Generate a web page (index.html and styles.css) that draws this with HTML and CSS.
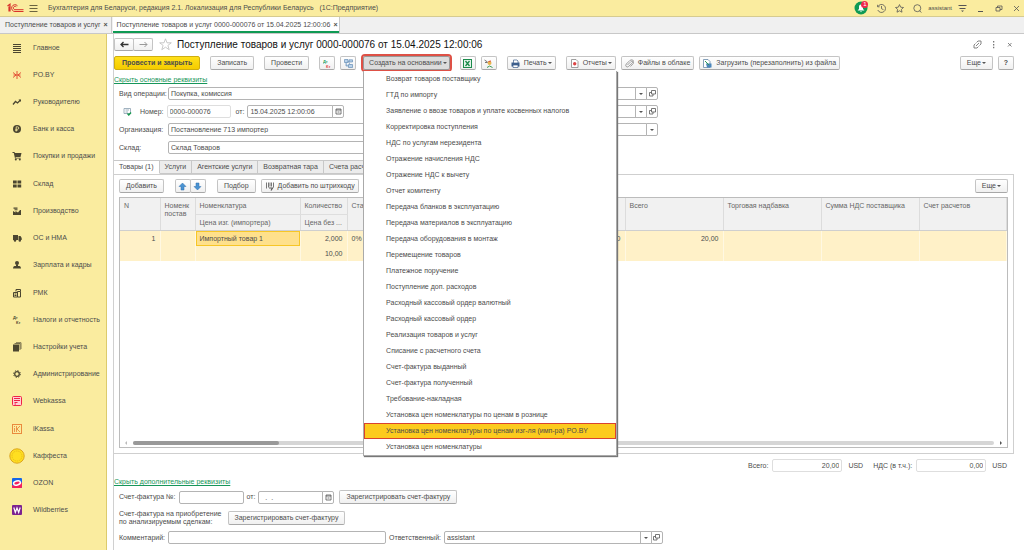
FILE: index.html
```html
<!DOCTYPE html>
<html lang="ru">
<head>
    <meta charset="UTF-8">
    <meta name="viewport" content="width=device-width, initial-scale=1.0">
    <title>Поступление товаров и услуг</title>
    <link rel="stylesheet" href="styles.css">
</head>
<body>
    <header class="topbar">
        <svg class="logo" viewBox="0 0 17 10" fill="none" stroke="#d9322b"><path d="M.5 3 3 1.2V8.500M2 3.500v5" stroke-width="1.200"/><path d="M10.500 2.800A3.400 3.400 0 1 0 8 8.500h8.500M9.300 3.800A1.700 1.700 0 1 0 8 6.700h8.500"/></svg>
        <svg class="icon" viewBox="0 0 9 9" stroke="#6b6440"><path d="M.5 1.500h8M.5 4.500h8M.5 7.500h8"/></svg>
        <span class="app-title">Бухгалтерия для Беларуси, редакция 2.1. Локализация для Республики Беларусь &nbsp; (1С:Предприятие)</span>
        <div class="top-tools">
            <span class="bell">
                <svg viewBox="0 0 14 14"><circle cx="7" cy="7" r="6.500" fill="#0f9a54"/><path d="M3.500 9.500 5 8V5.500a2 2 0 0 1 4 0V8l1.500 1.500zM6 10.200h2l-1 1z" fill="#fff"/></svg>
                <span class="badge">1</span>
            </span>
            <svg class="icon" viewBox="0 0 9 9" fill="none" stroke="#555" stroke-width=".8"><path d="M1 2.500A4 4 0 1 1 .8 6M.6.800v2h2M4.500 2v2.700l2 1"/></svg>
            <svg class="icon" viewBox="0 0 9 9" fill="none" stroke="#555" stroke-width=".8"><path d="m4.500.6 1.200 2.600 2.800.3-2.100 1.900.6 2.800-2.500-1.400L2 8.200l.6-2.800L.5 3.500l2.800-.3z"/></svg>
            <svg class="icon" viewBox="0 0 9 9" fill="none" stroke="#555" stroke-width=".8"><circle cx="4.300" cy="4.200" r="3.500"/><path d="m6.500 6.700 2 1.900"/></svg>
            <span class="user">assistant</span>
            <svg class="icon" viewBox="0 0 9 9" fill="none" stroke="#555"><path d="M.5 1.500h8M1.500 4.500h6"/><path d="M3 6.500h3L4.500 8z" fill="#555" stroke="none"/></svg>
            <svg class="icon" viewBox="0 0 9 9" stroke="#555"><path d="M2 7.500h5"/></svg>
            <svg class="icon" viewBox="0 0 9 9" fill="none" stroke="#555" stroke-width=".8"><path d="M2 3.500h4v3.500H2zM3.500 3.500V2H8v3.500H6"/></svg>
            <svg class="icon" viewBox="0 0 9 9" stroke="#555" stroke-width=".8"><path d="m2 2 5 5M7 2 2 7"/></svg>
        </div>
    </header>

    <nav class="window-tabs">
        <a class="window-tab" href="#">Поступление товаров и услуг <b>×</b></a>
        <a class="window-tab active" href="#">Поступление товаров и услуг 0000-000076 от 15.04.2025 12:00:06 <b>×</b></a>
    </nav>

    <div class="workspace">
        <nav class="sidebar">
            <a href="#"><svg viewBox="0 0 16 16" stroke="#4b4630"><path d="M4 4.500h8M4 6.500h8M4 8.500h8M4 10.500h8M4 12.500h8"/></svg>Главное</a>
            <a href="#"><svg viewBox="0 0 16 16" stroke="#e0452c"><path d="M8 4v8M4 5.500 7 8l-3 2.500M12 5.500 9 8l3 2.500M4.500 8h7" fill="none" stroke-width=".9"/></svg>PO.BY</a>
            <a href="#"><svg viewBox="0 0 16 16" fill="none" stroke="#4b4630" stroke-width="1.300"><path d="m4 10.500 2.500-3 2 1.500L11.500 6"/><path d="M9.500 5.500h2.500V8z" fill="#4b4630" stroke="none"/></svg>Руководителю</a>
            <a href="#"><svg viewBox="0 0 16 16"><circle cx="8" cy="8" r="4" fill="#4b4630"/><path d="M7.200 10.500V5.800h1.300a1.200 1.200 0 0 1 0 2.500H6.300M6.300 9.400h2.200" fill="none" stroke="#faec9f" stroke-width=".8"/></svg>Банк и касса</a>
            <a href="#"><svg viewBox="0 0 16 16" fill="#4b4630"><path d="M3.500 4h2l.4 1H12.500l-1 4H6.500l.2.800h5v.8H6L4.800 4.900H3.500z"/><circle cx="6.800" cy="11.500" r="1"/><circle cx="10.800" cy="11.500" r="1"/></svg>Покупки и продажи</a>
            <a href="#"><svg viewBox="0 0 16 16" fill="#4b4630"><path d="M4 4.500h3.700v3H4zM8.500 4.500h3.700v3H8.500zM4 8.500h3.700v3H4zM8.500 8.500h3.700v3H8.500z"/></svg>Склад</a>
            <a href="#"><svg viewBox="0 0 16 16" fill="#4b4630"><path d="M4 12V8l2.500 1.500V8L9 9.500 11 7h1v5z"/><path d="M4.500 4.500h4v1.200h-4zM5.500 6.200h3v1h-3z"/></svg>Производство</a>
            <a href="#"><svg viewBox="0 0 16 16" fill="#4b4630"><path d="M4 5h5v5H4zM9.500 6H11.500l1.200 2v2H9.500z"/><circle cx="6" cy="10.500" r="1.200"/><circle cx="10.800" cy="10.500" r="1.200"/></svg>ОС и НМА</a>
            <a href="#"><svg viewBox="0 0 16 16" fill="#4b4630"><circle cx="8" cy="6" r="2"/><path d="M7 7.500h2v1.500h1.500q1.500 0 1.500 2.500H4q0-2.500 1.500-2.500H7z"/></svg>Зарплата и кадры</a>
            <a href="#"><svg viewBox="0 0 16 16" fill="none" stroke="#4b4630"><path d="M4.500 7.500h4v4.500h-4zM8.500 6.500h3v5.500h-3zM7 6.500v-2h4.500v2M5.500 9h2M5.500 10.500h2"/></svg>РМК</a>
            <a href="#"><svg viewBox="0 0 16 16" class="dtkt" fill="#4b4630"><text x="4" y="7">Дт</text><text x="7" y="12">Кт</text></svg>Налоги и отчетность</a>
            <a href="#"><svg viewBox="0 0 16 16" fill="#4b4630"><path d="M4 5.500h6V12.500H4z"/><path d="M5.500 4.500H11V11M7 3.700h5V10" fill="none" stroke="#4b4630" stroke-width=".7"/></svg>Настройки учета</a>
            <a href="#"><svg viewBox="0 0 16 16" fill="none" stroke="#4b4630"><circle cx="8" cy="8" r="2.300" stroke-width="1.300"/><circle cx="8" cy="8" r="3.400" stroke-dasharray="1.300 1.370"/></svg>Администрирование</a>
            <a href="#"><svg viewBox="0 0 16 16"><rect x="3.500" y="3.500" width="9" height="9" rx="1" fill="#ffd0d4" stroke="#ef2347"/><path d="M5 5.500h6M5 7.500h6M5.500 9.500h3M5.500 11h1.500" stroke="#ef2347" fill="none"/></svg>Webkassa</a>
            <a href="#"><svg viewBox="0 0 16 16"><rect x="3.500" y="3.500" width="9" height="9" fill="none" stroke="#ea8a3e"/><path d="M5.500 7v4M5.500 5v1M7.500 5v6M11 5 8 8l3 3" stroke="#ea8a3e" stroke-width=".9" fill="none"/></svg>iKassa</a>
            <a href="#"><svg viewBox="0 0 16 16"><circle cx="8" cy="8" r="7.200" fill="#ffdf20" stroke="#dba51f"/><circle cx="8" cy="8" r="5" fill="none" stroke="#e3b21b" stroke-width=".7" stroke-dasharray="1.500 .7"/></svg>Каффеста</a>
            <a href="#"><svg viewBox="0 0 16 16"><rect x="3" y="3" width="10" height="10" rx="1" fill="#1466e8"/><path d="M3 10q5 2.500 10-3v5q0 1-1 1H4q-1 0-1-1z" fill="#f4215c"/><ellipse cx="8" cy="8" rx="3.500" ry="2" fill="#f4215c" stroke="#fff" stroke-width="1.500" transform="rotate(-15 8 8)"/></svg>OZON</a>
            <a href="#"><svg viewBox="0 0 16 16"><rect x="3" y="3" width="10" height="10" rx="1" fill="#7c2390"/><path d="m4.800 5.500 1.500 5L8 6l1.700 4.500 1.500-5" fill="none" stroke="#fff" stroke-width="1.200"/></svg>Wildberries</a>
        </nav>

        <main class="document">
            <div class="doc-head">
                <div class="btn-group">
                    <button class="btn" aria-label="Назад"><svg class="icon" viewBox="0 0 9 9" fill="none" stroke="#333" stroke-width="1.300"><path d="M8.500 4.500H1M3.500 2 1 4.500 3.500 7"/></svg></button>
                    <button class="btn" aria-label="Вперед"><svg class="icon" viewBox="0 0 9 9" fill="none" stroke="#999"><path d="M.5 4.500H8M5.500 2 8 4.500 5.500 7"/></svg></button>
                </div>
                <svg class="star" viewBox="0 0 13 13" fill="none" stroke="#bbb" stroke-width=".8"><path d="m6.500.8 1.500 4h4.300L8.900 7.400l1.300 4.300-3.700-2.500-3.700 2.500 1.300-4.300L.7 4.800H5z"/></svg>
                <h1>Поступление товаров и услуг 0000-000076 от 15.04.2025 12:00:06</h1>
                <div class="doc-tools">
                    <svg class="icon" viewBox="0 0 9 9" fill="none" stroke="#777" stroke-width=".9"><path d="M3.500 2.500 5 1h3v3L6.500 5.500M5.500 6.500 4 8H1V5l1.500-1.500M3 6l3-3"/></svg>
                    <svg class="icon" viewBox="0 0 9 9" fill="#777"><path d="M4 1h1.300v1.500H4zM4 4h1.300v1.500H4zM4 6.800h1.300v1.500H4z"/></svg>
                    <svg class="icon" viewBox="0 0 9 9" stroke="#777" stroke-width=".9"><path d="m3 3 3.500 3.500M6.500 3 3 6.500"/></svg>
                </div>
            </div>

            <div class="commands">
                <button class="btn primary">Провести и закрыть</button>
                <button class="btn">Записать</button>
                <button class="btn">Провести</button>
                <div class="pair">
                    <button class="btn square" aria-label="Проводки"><svg class="icon" viewBox="0 0 9 9"><g class="dtkt"><text x="0" y="4" fill="#1d9c5a">Дт</text><text x="3" y="9" fill="#e2433a">Кт</text></g></svg></button>
                    <button class="btn square" aria-label="Структура"><svg class="icon" viewBox="0 0 9 9" fill="#b9d2ea" stroke="#5582ad" stroke-width=".6"><path d="M.5.500h3.500v3H.5zM5 .8h3.500v2.200H5zM4.500 5.500h4v3h-4zM2 3.500V7h2.500M4 2l2 3.500"/></svg></button>
                </div>
                <div class="dropdown">
                    <button class="btn pressed">Создать на основании <i class="caret"></i></button>
                    <ul class="menu">
                        <li><button>Возврат товаров поставщику</button></li>
                        <li><button>ГТД по импорту</button></li>
                        <li><button>Заявление о ввозе товаров и уплате косвенных налогов</button></li>
                        <li><button>Корректировка поступления</button></li>
                        <li><button>НДС по услугам нерезидента</button></li>
                        <li><button>Отражение начисления НДС</button></li>
                        <li><button>Отражение НДС к вычету</button></li>
                        <li><button>Отчет комитенту</button></li>
                        <li><button>Передача бланков в эксплуатацию</button></li>
                        <li><button>Передача материалов в эксплуатацию</button></li>
                        <li><button>Передача оборудования в монтаж</button></li>
                        <li><button>Перемещение товаров</button></li>
                        <li><button>Платежное поручение</button></li>
                        <li><button>Поступление доп. расходов</button></li>
                        <li><button>Расходный кассовый ордер валютный</button></li>
                        <li><button>Расходный кассовый ордер</button></li>
                        <li><button>Реализация товаров и услуг</button></li>
                        <li><button>Списание с расчетного счета</button></li>
                        <li><button>Счет-фактура выданный</button></li>
                        <li><button>Счет-фактура полученный</button></li>
                        <li><button>Требование-накладная</button></li>
                        <li><button>Установка цен номенклатуры по ценам в рознице</button></li>
                        <li><button class="selected">Установка цен номенклатуры по ценам изг-ля (имп-ра) PO.BY</button></li>
                        <li><button>Установка цен номенклатуры</button></li>
                    </ul>
                </div>
                <div class="pair">
                    <button class="btn square" aria-label="Excel"><svg class="icon" viewBox="0 0 9 9"><rect x=".5" y=".5" width="8" height="8" fill="#e4f3e9" stroke="#1b8a4b"/><path d="m2.500 2 4 5M6.500 2l-4 5" stroke="#1b8a4b" stroke-width="1.300"/></svg></button>
                    <button class="btn square" aria-label="Заполнить"><svg class="icon" viewBox="0 0 9 9" fill="none"><circle cx="5.500" cy="4" r="2" fill="#e9b44b"/><path d="M.5 1 3.500 3M1 3.500h2.500" stroke="#555" stroke-width=".8"/><path d="M3 8.500q2.500-3 5.500 0" stroke="#3d9a55"/><path d="M4.500 2.500 7 2" stroke="#d64b3a"/></svg></button>
                </div>
                <button class="btn with-icon"><svg class="icon" viewBox="0 0 9 9"><path d="M.5 3.500h8v4h-8z" fill="#3d5f8c"/><path d="M2.500 1H6l1 1v2H2.500zM2 6h5v2.500H2z" fill="#fff" stroke="#3d5f8c" stroke-width=".7"/></svg>Печать <i class="caret"></i></button>
                <div class="pair">
                    <button class="btn with-icon"><svg class="icon" viewBox="0 0 9 9"><path d="M1.500.500H6L8 2.500v6H1.500z" fill="#fff" stroke="#888" stroke-width=".8"/><circle cx="4.700" cy="4.800" r="1.700" fill="#dc4444"/></svg>Отчеты <i class="caret"></i></button>
                    <button class="btn with-icon"><svg class="icon" viewBox="0 0 9 9" fill="none" stroke="#888" stroke-width=".8"><path d="M2.500 6 6 2.500q1-.8 1.500 0t-.3 1.500L3.500 7.500q-1.300 1-2.300 0T1.300 5L5 1.300Q7 .2 8.300 1.500t0 3L5.500 7.500"/></svg>Файлы в облаке</button>
                    <button class="btn with-icon"><svg class="icon" viewBox="0 0 9 9"><path d="M.5.500H5L7 2.500v6H.5z" fill="#fff" stroke="#6789a8" stroke-width=".8"/><path d="M3 4.500h5.500v4H4z" fill="#4b86bb"/><path d="m2 2 4 4" stroke="#2c9d5a"/></svg>Загрузить (перезаполнить) из файла</button>
                </div>
                <div class="pair right">
                    <button class="btn">Еще <i class="caret"></i></button>
                    <button class="btn square"><b>?</b></button>
                </div>
            </div>

            <a class="toggle-link" href="#">Скрыть основные реквизиты</a>

            <div class="fields">
                <div class="field">
                    <label for="operation">Вид операции:</label>
                    <input id="operation" type="text" value="Покупка, комиссия">
                </div>
                <div class="field combo">
                    <input type="text" aria-label="Контрагент">
                    <button aria-label="Выбрать контрагента"><i class="caret"></i></button>
                    <button aria-label="Открыть контрагента"><svg class="open" viewBox="0 0 7 7"><path d="M2.500.500h4v3.500h-4zM2.500 2.500h-2v3.500h3.500V4"/></svg></button>
                </div>
                <div class="field">
                    <svg class="posted" viewBox="0 0 9 9" fill="none"><path d="M1 1.500h6.500v5H1zM2.500 3h3.500M2.500 5h2.500" stroke="#8aa0b0" stroke-width=".8"/><path d="m4.500 6.500 1.300 1.500 2.200-2.500" stroke="#17994f" stroke-width="1.400"/></svg>
                    <label class="auto" for="number">Номер:</label>
                    <input class="readonly number" id="number" type="text" value="0000-000076">
                    <label class="auto from" for="date">от:</label>
                    <div class="combo date">
                        <input id="date" type="text" value="15.04.2025 12:00:06">
                        <button aria-label="Календарь"><svg class="open" viewBox="0 0 7 7"><path d="M1 1h5v5H1zM1 2h5M2.500 4h2"/></svg></button>
                    </div>
                </div>
                <div class="field combo">
                    <input type="text" aria-label="Договор">
                    <button aria-label="Выбрать договор"><i class="caret"></i></button>
                    <button aria-label="Открыть договор"><svg class="open" viewBox="0 0 7 7"><path d="M2.500.500h4v3.500h-4zM2.500 2.500h-2v3.500h3.500V4"/></svg></button>
                </div>
                <div class="field">
                    <label for="org">Организация:</label>
                    <input id="org" type="text" value="Постановление 713 импортер">
                </div>
                <div class="field combo">
                    <input type="text" aria-label="Зачет аванса">
                    <button aria-label="Выбрать зачет аванса"><i class="caret"></i></button>
                </div>
                <div class="field">
                    <label for="store">Склад:</label>
                    <input id="store" type="text" value="Склад Товаров">
                </div>
            </div>

            <div class="tabs">
                <button class="tab active">Товары (1)</button>
                <button class="tab">Услуги</button>
                <button class="tab">Агентские услуги</button>
                <button class="tab">Возвратная тара</button>
                <button class="tab">Счета расчетов</button>
            </div>

            <section class="panel">
                <div class="panel-tools">
                    <button class="btn">Добавить</button>
                    <div class="btn-group arrows">
                        <button class="btn" aria-label="Вверх"><svg class="icon" viewBox="0 0 9 9" fill="#4a93d2" stroke="#2f6fae" stroke-width=".5"><path d="m4.500 1 3.500 3.500H6V8H3V4.500H1z"/></svg></button>
                        <button class="btn" aria-label="Вниз"><svg class="icon" viewBox="0 0 9 9" fill="#4a93d2" stroke="#2f6fae" stroke-width=".5"><path d="M4.500 8 8 4.500H6V1H3v3.500H1z"/></svg></button>
                    </div>
                    <button class="btn">Подбор</button>
                    <button class="btn barcode"><svg class="icon" viewBox="0 0 9 9" stroke="#555" fill="none"><path d="M1.500.500v6M3.500.500v5M5 .500v4M6.500.500v4M8.500.500v5" stroke-width=".8"/><path d="M4 6h3.500L6 8.500" stroke-width="1.200"/></svg>Добавить по штрихкоду</button>
                    <button class="btn right">Еще <i class="caret"></i></button>
                </div>

                <div class="grid-box">
                    <table class="grid">
                        <colgroup>
                            <col class="c-n"><col class="c-sup"><col class="c-item"><col class="c-qty"><col class="c-rate"><col class="c-sum"><col class="c-total"><col class="c-total"><col class="c-total"><col>
                        </colgroup>
                        <thead>
                            <tr>
                                <th rowspan="2">N</th>
                                <th rowspan="2">Номенк постав</th>
                                <th class="split">Номенклатура</th>
                                <th class="split">Количество</th>
                                <th rowspan="2">Ставка</th>
                                <th rowspan="2"></th>
                                <th rowspan="2">Всего</th>
                                <th rowspan="2">Торговая надбавка</th>
                                <th rowspan="2">Сумма НДС поставщика</th>
                                <th rowspan="2">Счет расчетов</th>
                            </tr>
                            <tr>
                                <th>Цена изг. (импортера)</th>
                                <th>Цена без ...</th>
                            </tr>
                        </thead>
                        <tbody>
                            <tr>
                                <td class="num" rowspan="2">1</td>
                                <td rowspan="2"></td>
                                <td class="current">Импортный товар 1</td>
                                <td class="num">2,000</td>
                                <td rowspan="2">0%</td>
                                <td class="num" rowspan="2">20,00</td>
                                <td class="num" rowspan="2">20,00</td>
                                <td rowspan="2"></td>
                                <td rowspan="2"></td>
                                <td rowspan="2"></td>
                            </tr>
                            <tr>
                                <td></td>
                                <td class="num">10,00</td>
                            </tr>
                        </tbody>
                    </table>
                    <div class="scroll">
                        <i class="scroll-arrow"></i>
                        <div class="track"><div class="thumb"></div></div>
                        <i class="scroll-arrow next"></i>
                    </div>
                </div>
            </section>

            <div class="totals">
                <label for="total">Всего:</label>
                <input class="readonly" id="total" type="text" value="20,00">
                <span>USD</span>
                <label class="vat" for="vat">НДС (в т.ч.):</label>
                <input class="readonly" id="vat" type="text" value="0,00">
                <span>USD</span>
            </div>

            <a class="toggle-link" href="#">Скрыть дополнительные реквизиты</a>

            <div class="extra">
                <div class="line">
                    <label for="invoice">Счет-фактура №:</label>
                    <input class="invoice" id="invoice" type="text">
                    <label class="from" for="invoice-date">от:</label>
                    <div class="combo invoice-date">
                        <input id="invoice-date" type="text" value="  .  .">
                        <button aria-label="Календарь"><svg class="open" viewBox="0 0 7 7"><path d="M1 1h5v5H1zM1 2h5M2.500 4h2"/></svg></button>
                    </div>
                    <button class="btn register">Зарегистрировать счет-фактуру</button>
                </div>
                <div class="line tall">
                    <span>Счет-фактура на приобретение<br>по анализируемым сделкам:</span>
                    <button class="btn">Зарегистрировать счет-фактуру</button>
                </div>
                <div class="line">
                    <label for="comment">Комментарий:</label>
                    <input class="comment" id="comment" type="text">
                    <label for="owner">Ответственный:</label>
                    <div class="combo owner">
                        <input id="owner" type="text" value="assistant">
                        <button aria-label="Выбрать ответственного"><i class="caret"></i></button>
                        <button aria-label="Открыть ответственного"><svg class="open" viewBox="0 0 7 7"><path d="M2.500.500h4v3.500h-4zM2.500 2.500h-2v3.500h3.500V4"/></svg></button>
                    </div>
                </div>
            </div>
        </main>
    </div>
</body>
</html>
```
FILE: styles.css
```css
* {
    box-sizing: border-box;
}
body {
    margin: 0;
    min-height: 100vh;
    display: flex;
    flex-direction: column;
    background-color: #fff;
    color: #4c4c4c;
    font-family: "Liberation Sans", Arial, sans-serif;
    font-size: 7px;
    line-height: 8px;
}
a {
    color: inherit;
    text-decoration: none;
}
button, input {
    font: inherit;
    color: inherit;
    margin: 0;
}
svg {
    display: block;
    flex: none;
}
.icon {
    width: 9px;
    height: 9px;
}

/* top bar */
.topbar {
    display: flex;
    align-items: center;
    height: 17px;
    padding: 0 3px 0 7px;
    background-color: #faec9f;
    border-bottom: 1px solid #d6cb90;
}
.logo {
    width: 17px;
    height: 10px;
    margin-right: 5px;
}
.app-title {
    margin-left: 10px;
    white-space: nowrap;
}
.top-tools {
    display: flex;
    align-items: center;
    gap: 9px;
    margin-left: auto;
}
.bell {
    position: relative;
}
.bell svg {
    width: 14px;
    height: 14px;
}
.badge {
    position: absolute;
    top: 0;
    right: 0;
    width: 7px;
    height: 7px;
    border-radius: 50%;
    background-color: #f0284a;
    color: #fff;
    font-size: 6px;
    line-height: 7px;
    text-align: center;
}
.user {
    margin: 0 -3px;
    font-size: 6px;
}

/* open windows */
.window-tabs {
    display: flex;
    height: 17px;
    background-color: #f0f0f0;
    border-bottom: 1px solid #c8c8c8;
}
.window-tab {
    display: flex;
    align-items: center;
    gap: 3px;
    padding: 0 3px 0 5px;
    border-right: 1px solid #c8c8c8;
}
.window-tab.active {
    margin-left: 1px;
    padding: 0 2px 0 4px;
    background-color: #fff;
    box-shadow: inset 0 -2px #0f9a54;
}

.workspace {
    flex: 1;
    display: flex;
}

/* sections */
.sidebar {
    display: flex;
    flex-direction: column;
    width: 107px;
    flex: none;
    padding-bottom: 26px;
    background-color: #faec9f;
    border-right: 1px solid #dccb6c;
}
.sidebar a {
    flex: 1;
    display: flex;
    align-items: center;
    gap: 8px;
    padding-left: 9px;
    white-space: nowrap;
}
.sidebar svg {
    width: 16px;
    height: 16px;
}
.dtkt {
    font-size: 4px;
    font-weight: bold;
}

/* document */
.document {
    flex: 1;
    min-width: 0;
    display: flex;
    flex-direction: column;
    margin-left: 6px;
    padding: 4px 10px 6px 0;
    border-left: 1px solid #d0d0d0;
}
.doc-head {
    display: flex;
    align-items: center;
    height: 13px;
}
h1 {
    margin: 0 0 0 5px;
    color: #111;
    font-size: 10px;
    font-weight: normal;
    line-height: 12px;
}
.star {
    width: 13px;
    height: 13px;
    margin-left: 6px;
}
.doc-tools {
    display: flex;
    gap: 7px;
    margin-left: auto;
}
.btn {
    display: inline-flex;
    align-items: center;
    justify-content: center;
    gap: 4px;
    height: 14px;
    padding: 0 6px;
    border: 1px solid #c4c4c4;
    border-bottom-color: #a8a8a8;
    border-radius: 2px;
    background: linear-gradient(#fff, #f0f0f0);
    white-space: nowrap;
}
.btn.primary {
    padding: 0 7px;
    background: linear-gradient(#ffe01a, #f5cc00);
    border-color: #cfae10;
    font-weight: bold;
}
.btn.square {
    width: 16px;
    padding: 0;
}
.btn.with-icon {
    padding: 0 3px;
}
.btn.pressed {
    padding: 0 2px 0 5px;
    background: #dcdcdc;
    border-color: #999;
    outline: 2px solid #de5146;
}
.btn .caret {
    margin-left: -3px;
}
.btn-group {
    display: flex;
}
.btn-group .btn {
    width: 20px;
    height: 13px;
    padding: 0;
}
.btn-group .btn + .btn {
    margin-left: -1px;
}
.caret {
    border: 2px solid transparent;
    border-top-color: #555;
    border-bottom: 0;
}
.commands {
    display: flex;
    gap: 10px;
    margin-top: 5px;
}
.pair {
    display: flex;
    gap: 5px;
}
.right {
    margin-left: auto;
}
.dropdown {
    position: relative;
    margin-left: -3px;
}
.menu {
    position: absolute;
    top: 15px;
    left: 0;
    z-index: 2;
    width: 254px;
    margin: 0;
    padding: 0;
    list-style: none;
    background-color: #fff;
    border: 1px solid #aaa;
    border-top: 0;
    box-shadow: 1px 1px 1px #777;
}
.menu button {
    display: block;
    width: 100%;
    height: 16px;
    padding: 0 22px;
    border: 0;
    background: none;
    text-align: left;
}
.menu .selected {
    background-color: #fccb1d;
    border: 1px solid #d9432f;
    padding: 0 21px;
}
.toggle-link {
    align-self: flex-start;
    margin-top: 6px;
    color: #17965a;
    text-decoration: underline;
}

/* header fields */
.fields {
    display: grid;
    grid-template-columns: 270px 255px;
    column-gap: 14px;
    row-gap: 5px;
    margin-top: 3px;
    padding-left: 5px;
}
.field {
    display: flex;
    align-items: center;
}
.field label {
    width: 49px;
    flex: none;
}
.field label.auto {
    width: auto;
}
input {
    flex: 1;
    min-width: 0;
    height: 13px;
    padding: 0 2px;
    border: 1px solid #b4b4b4;
    border-radius: 2px;
    background-color: #fff;
}
input.readonly {
    border-color: #dedede;
}
.combo {
    display: flex;
}
.combo input {
    border-radius: 2px 0 0 2px;
}
.combo button {
    display: flex;
    align-items: center;
    justify-content: center;
    width: 12px;
    height: 13px;
    margin-left: -1px;
    padding: 0;
    border: 1px solid #b4b4b4;
    background-color: #fff;
}
.combo button:last-child {
    border-radius: 0 2px 2px 0;
}
.open {
    width: 7px;
    height: 7px;
    fill: none;
    stroke: #555;
    stroke-width: .8;
}
.posted {
    width: 9px;
    height: 9px;
    margin: 0 8px 0 4px;
}
.number {
    flex: none;
    width: 64px;
    margin-left: 3px;
}
.field .from {
    margin: 0 3px 0 5px;
}
.date {
    width: 97px;
}

/* tabs */
.tabs {
    display: flex;
    margin-top: 6px;
}
.tab {
    height: 14px;
    padding: 0 5px;
    border: 1px solid #c8c8c8;
    border-left: 0;
    background-color: #ececec;
}
.tab.active {
    background-color: #fff;
    border-bottom-color: #fff;
}
.panel {
    flex: 1;
    display: flex;
    flex-direction: column;
    padding: 4px 5px 5px;
    border: 1px solid #cfcfcf;
    border-left: 0;
}
.panel-tools {
    display: flex;
    gap: 11px;
}
.barcode {
    margin-left: -6px;
    padding: 0 3px;
}
.arrows .btn {
    width: 16px;
    height: 14px;
}
.grid-box {
    flex: 1;
    display: flex;
    flex-direction: column;
    margin-top: 4px;
    border: 1px solid #bcbcbc;
}
.grid {
    width: 100%;
    table-layout: fixed;
    border-collapse: collapse;
}
.grid th, .grid td {
    height: 16px;
    padding: 4px 4px 3px;
    font-weight: normal;
    text-align: left;
    vertical-align: top;
    border-right: 1px solid #dcdcdc;
}
.grid th {
    background-color: #f1f1f1;
    color: #666;
    border-bottom: 1px solid #cfcfcf;
    white-space: nowrap;
}
.grid th:nth-child(2) {
    white-space: normal;
}
.grid th.split {
    border-bottom-color: #dedede;
}
.grid td {
    height: 15px;
    background-color: #fff1c8;
    border-color: #fff8e2;
}
.grid td.num {
    text-align: right;
}
.grid td.current {
    background-color: #fee08c;
    box-shadow: inset 0 0 0 1px #f7c626;
}
.c-n {
    width: 40px;
}
.c-sup {
    width: 35px;
}
.c-item {
    width: 105px;
}
.c-qty {
    width: 47px;
}
.c-rate {
    width: 120px;
}
.c-sum {
    width: 158px;
}
.c-total {
    width: 98px;
}
.scroll {
    display: flex;
    align-items: center;
    gap: 6px;
    margin-top: auto;
    padding: 2px 5px;
}
.track {
    flex: 1;
    height: 4px;
    border-radius: 2px;
    background-color: #d6d6d6;
}
.thumb {
    width: 17%;
    height: 4px;
    border-radius: 2px;
    background-color: #999;
}
.scroll-arrow {
    border: 2px solid transparent;
    border-right-color: #bbb;
    border-left: 0;
}
.scroll-arrow.next {
    border-left: 2px solid #555;
    border-right: 0;
}

/* totals and extra details */
.totals {
    display: flex;
    align-items: center;
    justify-content: flex-end;
    gap: 4px;
    margin-top: 5px;
    padding-right: 7px;
}
.totals input {
    flex: none;
    width: 70px;
    text-align: right;
}
.totals span {
    margin-left: 2px;
}
.totals .vat {
    margin-left: 6px;
}
.extra {
    display: flex;
    flex-direction: column;
    gap: 5px;
    margin-top: 4px;
    padding-left: 5px;
}
.line {
    display: flex;
    align-items: center;
    gap: 3px;
}
.line.tall {
    height: 17px;
    gap: 6px;
}
.invoice {
    flex: none;
    width: 65px;
}
.invoice-date {
    width: 76px;
}
.register {
    margin-left: 2px;
}
.comment {
    flex: none;
    width: 218px;
}
.owner {
    width: 219px;
}
```
